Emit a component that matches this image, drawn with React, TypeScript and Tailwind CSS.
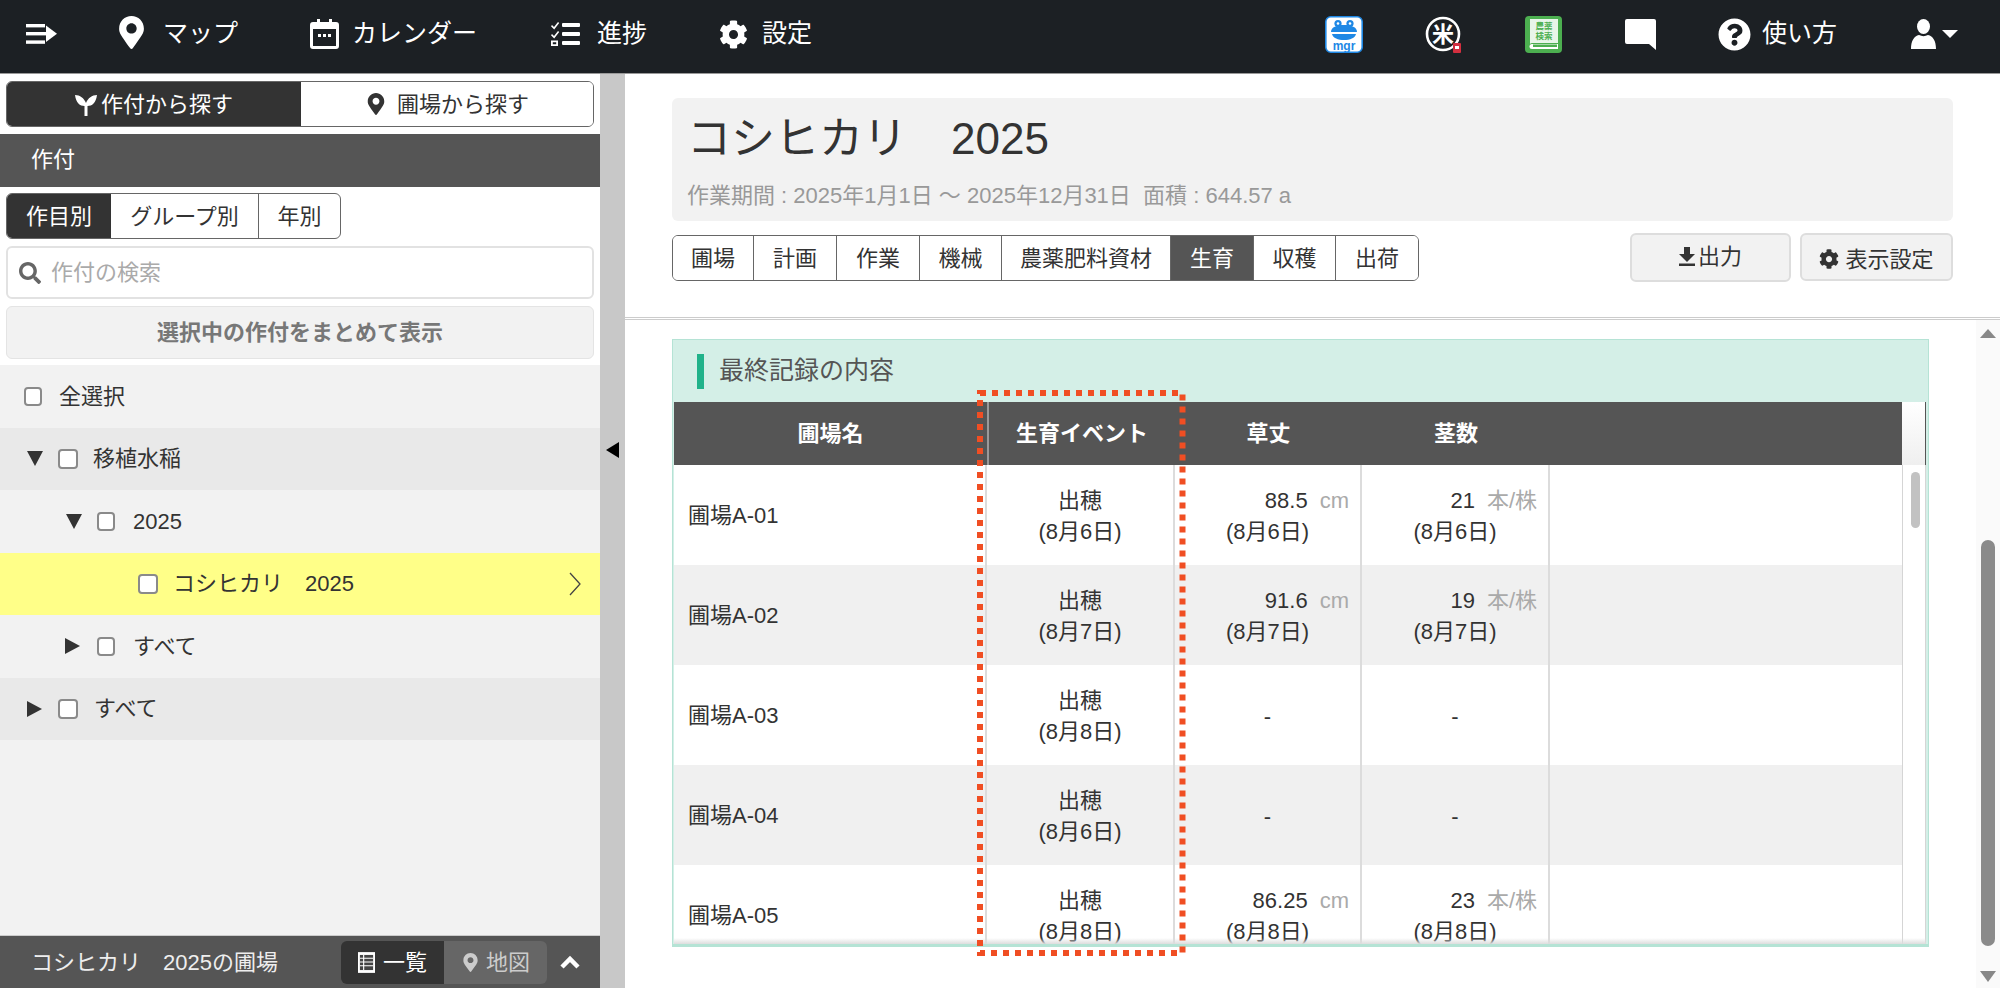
import { FaCog, FaMapMarkerAlt, FaQuestionCircle, FaSearch } from 'react-icons/fa'

const rows = [
  { name: '圃場A-01', date: '(8月6日)', height: '88.5', stems: '21' },
  { name: '圃場A-02', date: '(8月7日)', height: '91.6', stems: '19' },
  { name: '圃場A-03', date: '(8月8日)' },
  { name: '圃場A-04', date: '(8月6日)' },
  { name: '圃場A-05', date: '(8月8日)', height: '86.25', stems: '23' },
]

const tabs = ['圃場', '計画', '作業', '機械', '農薬肥料資材', '生育', '収穫', '出荷']
const tabWidths = ['w-[81px]', 'w-[83px]', 'w-[83px]', 'w-[82px]', 'w-[169px]', 'w-[83px]', 'w-[82px]', 'w-[82px]']

function MenuIcon() {
  return (
    <svg viewBox="0 0 31 20" className="h-[20px] w-[31px] fill-white">
      <rect x="0" y="0" width="19" height="3.4" />
      <rect x="0" y="8" width="22" height="3.4" />
      <rect x="0" y="16.4" width="19" height="3.4" />
      <path d="M20 1.5 31 9.8 20 18z" />
    </svg>
  )
}

function CalendarIcon() {
  return (
    <svg viewBox="0 0 29 30" className="h-[30px] w-[29px] fill-white">
      <path d="M3 3h4V0h3v3h9V0h3v3h4a3 3 0 0 1 3 3v21a3 3 0 0 1-3 3H3a3 3 0 0 1-3-3V6a3 3 0 0 1 3-3zm0 7v17h23V10z" fillRule="evenodd" />
      <rect x="8" y="15" width="3" height="3" />
      <rect x="13" y="15" width="3" height="3" />
      <rect x="18" y="15" width="3" height="3" />
    </svg>
  )
}

function TasksIcon() {
  return (
    <svg viewBox="0 0 29 24" className="h-[24px] w-[29px] fill-white">
      <path d="M1 3l2 2 4-5 1.2 1L3.2 7.5 0 4.2z" />
      <path d="M1 12l2 2 4-5 1.2 1-5 6.5L0 13.2z" />
      <path d="M0 18.5h7v5.5H0zm1.8 1.7v2.1h3.4v-2.1z" fillRule="evenodd" />
      <rect x="11" y="1" width="18" height="4" rx="1" />
      <rect x="11" y="10" width="18" height="4" rx="1" />
      <rect x="11" y="19" width="18" height="4" rx="1" />
    </svg>
  )
}

function FrogIcon() {
  return (
    <svg viewBox="0 0 38 37" className="h-[37px] w-[38px]">
      <rect x="0.8" y="0.8" width="36.4" height="35.4" rx="5" fill="#ffffff" stroke="#1e88e5" strokeWidth="1.6" />
      <circle cx="13" cy="7.5" r="3.6" fill="#1e88e5" />
      <circle cx="25" cy="7.5" r="3.6" fill="#1e88e5" />
      <circle cx="13" cy="7.5" r="1.3" fill="#ffffff" />
      <circle cx="25" cy="7.5" r="1.3" fill="#ffffff" />
      <path d="M6 16c0-5 6-7 13-7s13 2 13 7z" fill="#1e88e5" />
      <path d="M7 18h24c-1 4-6 6-12 6s-11-2-12-6z" fill="#1e88e5" />
      <text x="19" y="34" textAnchor="middle" fontSize="12" fontWeight="700" fill="#1e88e5" fontFamily="Liberation Sans, sans-serif">mgr</text>
    </svg>
  )
}

function RiceIcon() {
  return (
    <svg viewBox="0 0 37 37" className="h-[37px] w-[37px]">
      <circle cx="18" cy="18" r="16" fill="none" stroke="#ffffff" strokeWidth="2.6" />
      <text x="18" y="26" textAnchor="middle" fontSize="22" fontWeight="700" fill="#ffffff" fontFamily="Noto Sans CJK JP, sans-serif">米</text>
      <rect x="28" y="27" width="8" height="10" rx="1" fill="#d32f3f" />
      <rect x="30" y="30" width="4" height="3" fill="#ffffff" />
    </svg>
  )
}

function BookIcon() {
  return (
    <svg viewBox="0 0 37 37" className="h-[37px] w-[37px]">
      <rect x="0" y="0" width="37" height="37" rx="4" fill="#4caf50" />
      <path d="M5 3h28v24H7a3 3 0 0 0-2 1z" fill="#e8f5e9" />
      <text x="19" y="13" textAnchor="middle" fontSize="8.5" fontWeight="700" fill="#4caf50" fontFamily="Noto Sans CJK JP, sans-serif">農薬</text>
      <text x="19" y="22.5" textAnchor="middle" fontSize="8.5" fontWeight="700" fill="#4caf50" fontFamily="Noto Sans CJK JP, sans-serif">検索</text>
      <path d="M7 28h26v5H7a2.5 2.5 0 0 1 0-5z" fill="#ffffff" />
      <rect x="8" y="28.5" width="24" height="2.5" fill="#4caf50" />
    </svg>
  )
}

function ChatIcon() {
  return (
    <svg viewBox="0 0 31 31" className="h-[31px] w-[31px] fill-white">
      <path d="M2 0h27a2 2 0 0 1 2 2v29l-7-6H2a2 2 0 0 1-2-2V2a2 2 0 0 1 2-2z" />
    </svg>
  )
}

function UserIcon() {
  return (
    <svg viewBox="0 0 25 30" className="h-[30px] w-[25px] fill-white">
      <ellipse cx="12.500" cy="7.500" rx="6.500" ry="7.500" />
      <path d="M0 30c0-8 3-13 8-14 3 1.500 6 1.500 9 0 5 1 8 6 8 14z" />
    </svg>
  )
}

function SproutIcon() {
  return (
    <svg viewBox="0 0 22 24" className="h-[24px] w-[22px] fill-white">
      <path d="M9.5 24V14C5 14 1 11 0 3c5 0 9 3 11 8 2-5 6-8 11-8-1 8-5 11-9.500 11v10z" />
    </svg>
  )
}

function ListIcon() {
  return (
    <svg viewBox="0 0 18 22" className="h-[21px] w-[17px]">
      <rect x="0" y="0" width="18" height="22" fill="#ffffff" />
      <rect x="2" y="3" width="14" height="16" fill="#444444" />
      <path d="M2 6.500h14M2 10.500h14M2 14.500h14M6 3v16" stroke="#ffffff" strokeWidth="1.200" />
    </svg>
  )
}

function DownloadIcon() {
  return (
    <svg viewBox="0 0 16 19" className="h-[19px] w-[16px] fill-[#333]">
      <path d="M5 0h6v7h5l-8 8-8-8h5z" />
      <rect x="0" y="16.500" width="16" height="2.500" />
    </svg>
  )
}

function Checkbox({ small }: { small?: boolean }) {
  return (
    <span
      className={`block shrink-0 rounded-[4px] border-2 border-[#8a8a8a] bg-white ${small ? 'h-[19px] w-[18px]' : 'h-[20px] w-[20px]'}`}
    />
  )
}

function TriangleDown() {
  return <span className="h-0 w-0 shrink-0 border-x-[8px] border-t-[15px] border-x-transparent border-t-[#333]" />
}

function TriangleRight() {
  return <span className="h-0 w-0 shrink-0 border-y-[8px] border-l-[15px] border-y-transparent border-l-[#333]" />
}

function TreeRow({ className, children }: { className: string; children: React.ReactNode }) {
  return <div className={`flex h-[62.500px] items-center text-[22px] text-[#333] ${className}`}>{children}</div>
}

function Sidebar() {
  return (
    <aside className="flex w-[600px] shrink-0 flex-col bg-[#f2f2f2]">
      <div className="bg-white px-[6px] pt-[7px] pb-[7px]">
        <div className="flex h-[46px] overflow-hidden rounded-[6px] border border-[#666] text-[22px]">
          <div className="flex w-[294px] items-center justify-center gap-[4px] bg-[#333] text-white">
            <SproutIcon />
            作付から探す
          </div>
          <div className="flex flex-1 items-center justify-center gap-[10px] bg-white text-[#333]">
            <FaMapMarkerAlt className="text-[22px]" />
            圃場から探す
          </div>
        </div>
      </div>
      <div className="flex h-[53px] items-center bg-[#555] pb-[2px] pl-[31px] text-[22px] text-white">作付</div>
      <div className="flex flex-col gap-[7px] bg-white px-[6px] pt-[6px] pb-[6px]">
        <div className="flex h-[46px] w-[335px] overflow-hidden rounded-[6px] border border-[#666] text-[22px] text-[#333]">
          <div className="flex w-[104px] items-center justify-center bg-[#333] text-white">作目別</div>
          <div className="flex w-[148px] items-center justify-center border-r border-[#666]">グループ別</div>
          <div className="flex flex-1 items-center justify-center">年別</div>
        </div>
        <div className="flex h-[53px] items-center gap-[10px] rounded-[6px] border-2 border-[#e2e2e2] pl-[11px] text-[22px] text-[#aaa]">
          <FaSearch className="text-[22px] text-[#666]" />
          作付の検索
        </div>
        <div className="flex h-[53px] items-center justify-center rounded-[6px] border border-[#e4e4e4] bg-[#f2f2f2] text-[22px] font-bold text-[#777]">
          選択中の作付をまとめて表示
        </div>
      </div>
      <div className="flex-1">
        <TreeRow className="pl-[24px]">
          <Checkbox small />
          <span className="ml-[17px]">全選択</span>
        </TreeRow>
        <TreeRow className="bg-[#e9e9e9] pl-[27px]">
          <TriangleDown />
          <span className="ml-[15px]"><Checkbox /></span>
          <span className="ml-[15px]">移植水稲</span>
        </TreeRow>
        <TreeRow className="pl-[66px]">
          <TriangleDown />
          <span className="ml-[15px]"><Checkbox small /></span>
          <span className="ml-[18px]">2025</span>
        </TreeRow>
        <TreeRow className="bg-[#ffff88] pl-[138px]">
          <Checkbox />
          <span className="ml-[15px]">コシヒカリ　2025</span>
          <svg viewBox="0 0 12 24" className="ml-auto mr-[19px] h-[24px] w-[12px] fill-none stroke-[#444]">
            <path d="M1 1l10 11L1 23" strokeWidth="1.300" />
          </svg>
        </TreeRow>
        <TreeRow className="pl-[65px]">
          <TriangleRight />
          <span className="ml-[17px]"><Checkbox small /></span>
          <span className="ml-[18px]">すべて</span>
        </TreeRow>
        <TreeRow className="bg-[#e9e9e9] pl-[27px]">
          <TriangleRight />
          <span className="ml-[16px]"><Checkbox /></span>
          <span className="ml-[16px]">すべて</span>
        </TreeRow>
      </div>
      <div className="flex h-[53px] items-center border-t border-[#ccc] bg-[#555] pl-[31px] text-[22px] text-[#eee]">
        <span>コシヒカリ　2025の圃場</span>
        <div className="ml-[63px] flex h-[43px] w-[206px] overflow-hidden rounded-[6px]">
          <div className="flex w-[103px] items-center justify-center gap-[8px] bg-[#333] text-white">
            <ListIcon />
            一覧
          </div>
          <div className="flex flex-1 items-center justify-center gap-[6px] bg-[#666] text-[#ccc]">
            <FaMapMarkerAlt className="text-[19px]" />
            地図
          </div>
        </div>
        <svg viewBox="0 0 20 14" className="ml-[13px] h-[14px] w-[20px] fill-none stroke-white">
          <path d="M2 12l8-8 8 8" strokeWidth="4.500" />
        </svg>
      </div>
    </aside>
  )
}

function Measure({ value, unit }: { value?: string; unit: string }) {
  if (!value) {
    return <span>-</span>
  }
  return (
    <span className="flex w-full justify-end gap-[12px] pr-[11px]">
      <span>{value}</span>
      <span className="text-[#aaa]">{unit}</span>
    </span>
  )
}

function DataRow({ row, striped }: { row: (typeof rows)[number]; striped: boolean }) {
  const cell = 'flex h-full flex-col items-center justify-center border-r-2 border-[#dcdcdc] pt-[2px] leading-[31px]'
  return (
    <div className={`grid h-[100px] shrink-0 grid-cols-[313px_188px_187px_188px_1fr] text-[22px] text-[#333] ${striped ? 'bg-[#f0f0f0]' : 'bg-white'}`}>
      <div className="flex items-center border-r-2 border-[#dcdcdc] pl-[14px]">{row.name}</div>
      <div className={cell}>
        <span>出穂</span>
        <span>{row.date}</span>
      </div>
      <div className={cell}>
        <Measure value={row.height} unit="cm" />
        {row.height ? <span>{row.date}</span> : null}
      </div>
      <div className={cell}>
        <Measure value={row.stems} unit="本/株" />
        {row.stems ? <span>{row.date}</span> : null}
      </div>
      <div />
    </div>
  )
}

function RecordPanel() {
  return (
    <section className="relative flex h-[608px] w-[1257px] flex-col border-x border-b-[3px] border-t border-[#b5e3d5] bg-[#d4efe7]">
      <div className="flex h-[62px] shrink-0 items-center pl-[24px]">
        <span className="h-[35px] w-[7px] bg-[#20b28a]" />
        <h2 className="ml-[15px] text-[25px] text-[#555]">最終記録の内容</h2>
      </div>
      <div className="mx-[1px] mr-[2px] flex h-[63px] shrink-0 bg-white">
        <div className="grid w-[1228px] grid-cols-[313px_188px_187px_188px_1fr] items-center bg-[#555] text-center text-[22px] font-bold text-white">
          <span>圃場名</span>
          <span className="flex h-full items-center justify-center border-l-2 border-[#999]">生育イベント</span>
          <span>草丈</span>
          <span>茎数</span>
        </div>
        <div className="flex-1 border-r border-[#555] bg-linear-to-b from-white to-[#efefef]" />
      </div>
      <div className="relative mx-[1px] mr-[2px] flex flex-1 overflow-hidden bg-white">
        <div className="flex w-[1228px] flex-col">
          {rows.map((row, index) => (
            <DataRow key={row.name} row={row} striped={index % 2 === 1} />
          ))}
        </div>
        <div className="flex-1 border-x border-[#d5d5d5] pl-[8px] pt-[7px]">
          <div className="h-[56px] w-[9px] rounded-full bg-[#c2c2c2]" />
        </div>
        <div className="absolute inset-x-0 bottom-0 h-[6px] bg-linear-to-t from-[#dddddd] to-transparent" />
      </div>
      <svg viewBox="0 0 212 570" className="absolute left-[303px] top-[49px] h-[570px] w-[212px] fill-none">
        <rect x="4" y="4" width="202.500" height="560" stroke="#f04e23" strokeWidth="6" strokeDasharray="6 6" />
      </svg>
    </section>
  )
}

export default function App() {
  return (
    <div className="flex h-[988px] w-[2000px] flex-col overflow-hidden bg-white text-[22px] [font-family:'Liberation_Sans','Noto_Sans_CJK_JP',sans-serif]">
      <header className="flex h-[74px] shrink-0 items-center border-b border-[#999] bg-[#1c2024] pb-[5px] pl-[26px] pr-[42px] text-[25px] text-white">
        <MenuIcon />
        <FaMapMarkerAlt className="-mt-[4px] ml-[58px] text-[33px]" />
        <span className="ml-[15px]">マップ</span>
        <span className="ml-[72px]"><CalendarIcon /></span>
        <span className="ml-[13px]">カレンダー</span>
        <span className="ml-[74px]"><TasksIcon /></span>
        <span className="ml-[17px]">進捗</span>
        <FaCog className="ml-[72px] text-[29px]" />
        <span className="ml-[14px]">設定</span>
        <span className="ml-auto"><FrogIcon /></span>
        <span className="ml-[62px]"><RiceIcon /></span>
        <span className="ml-[63px]"><BookIcon /></span>
        <span className="ml-[63px]"><ChatIcon /></span>
        <FaQuestionCircle className="ml-[62px] text-[33px]" />
        <span className="ml-[11px]">使い方</span>
        <span className="ml-[74px]"><UserIcon /></span>
        <span className="ml-[6px] h-0 w-0 border-x-[8px] border-t-[8px] border-x-transparent border-t-white" />
      </header>
      <div className="flex min-h-0 flex-1">
        <Sidebar />
        <div className="flex w-[25px] shrink-0 items-center justify-center bg-[#c8c8c8] pb-[162px]">
          <span className="h-0 w-0 border-y-[8px] border-r-[13px] border-y-transparent border-r-black" />
        </div>
        <main className="flex min-w-0 flex-1 flex-col">
          <div className="h-[246px] shrink-0 border-b-[3px] border-double border-[#ccc] px-[47px] pt-[24px]">
            <div className="h-[123px] rounded-[6px] bg-[#f2f2f2] pl-[15px] pt-[13px]">
              <h1 className="text-[44px] leading-[56px] text-[#333]">コシヒカリ　2025</h1>
              <p className="mt-[15px] text-[22px] leading-[28px] text-[#999]">作業期間 : 2025年1月1日 ～ 2025年12月31日&nbsp;&nbsp;面積 : 644.57 a</p>
            </div>
            <div className="mt-[12px] flex items-start justify-between">
              <div className="mt-[2px] flex h-[46px] overflow-hidden rounded-[6px] border border-[#666] text-[22px] text-[#333]">
                {tabs.map((tab, index) => (
                  <span
                    key={tab}
                    className={`flex items-center justify-center ${tabWidths[index]} ${index < tabs.length - 1 ? 'border-r border-[#666]' : ''} ${tab === '生育' ? 'bg-[#555] text-white' : 'bg-white'}`}
                  >
                    {tab}
                  </span>
                ))}
              </div>
              <div className="flex gap-[9px] text-[22px] text-[#333]">
                <span className="flex h-[49px] w-[161px] items-center justify-center gap-[3px] rounded-[6px] border-2 border-[#ddd] bg-[#f2f2f2] pb-[2px]">
                  <DownloadIcon />
                  出力
                </span>
                <span className="flex h-[48px] w-[153px] items-center justify-center gap-[6px] rounded-[6px] border-2 border-[#ddd] bg-[#f2f2f2] pt-[4px]">
                  <FaCog className="text-[20px]" />
                  表示設定
                </span>
              </div>
            </div>
          </div>
          <div className="flex min-h-0 flex-1 justify-between pl-[47px] pt-[19px]">
            <RecordPanel />
            <div className="-mt-[19px] flex w-[24px] flex-col items-center bg-[#fafafa] pt-[9px]">
              <span className="h-0 w-0 border-x-[8px] border-b-[9px] border-x-transparent border-b-[#888]" />
              <div className="mt-[202px] h-[406px] w-[14px] rounded-full bg-[#8a8a8a]" />
              <span className="mt-[25px] h-0 w-0 border-x-[8px] border-t-[11px] border-x-transparent border-t-[#888]" />
            </div>
          </div>
        </main>
      </div>
    </div>
  )
}
